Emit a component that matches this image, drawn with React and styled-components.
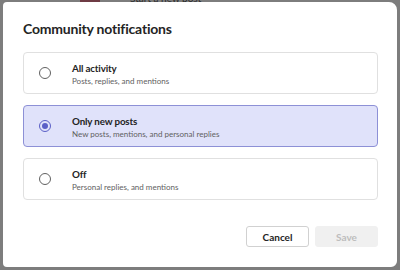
import React, { useState } from 'react';
import styled, { createGlobalStyle, css } from 'styled-components';

const GlobalStyle = createGlobalStyle`
  html, body {
    margin: 0;
    padding: 0;
    background: #7d7d7d;
    font-family: "Segoe UI", Lato, "Noto Sans", sans-serif;
  }
`;

const Screen = styled.div`
  position: relative;
  width: 400px;
  height: 270px;
  overflow: hidden;
  background: #7d7d7d;
  padding: 2px 3px 3px 3px;
  box-sizing: border-box;
`;

const Behind = styled.div`
  position: absolute;
  top: -8px;
  left: 80px;
  display: flex;
  gap: 30px;
  align-items: center;
  font-size: 10px;
  color: #2a2a2a;
`;

const Badge = styled.span`
  width: 20px;
  height: 10px;
  background: #6e3b44;
`;

const Dialog = styled.div`
  position: relative;
  height: 100%;
  box-sizing: border-box;
  background: #ffffff;
  border-radius: 4px 8px 6px 4px;
  padding: 16px 19px 20px 20px;
  display: flex;
  flex-direction: column;
`;

const Title = styled.h2`
  margin: 0 0 13px;
  font-size: 14px;
  line-height: 21px;
  font-weight: 700;
  letter-spacing: -0.2px;
  color: #242424;
`;

const Options = styled.div`
  display: flex;
  flex-direction: column;
  gap: 11px;
`;

const Card = styled.label`
  display: flex;
  align-items: center;
  height: 42px;
  box-sizing: border-box;
  border: 1px solid #e0e0e0;
  border-radius: 4px;
  padding-left: 15px;
  cursor: pointer;
  ${({ $active }) =>
    $active &&
    css`
      background: #e0e2fa;
      border-color: #8d90d6;
    `}
`;

const Radio = styled.span`
  width: 12px;
  height: 12px;
  box-sizing: border-box;
  border-radius: 50%;
  border: 1px solid ${({ $active }) => ($active ? '#5b5fc7' : '#616161')};
  display: flex;
  align-items: center;
  justify-content: center;
  flex-shrink: 0;
  &::after {
    content: '';
    width: 6px;
    height: 6px;
    border-radius: 50%;
    background: ${({ $active }) => ($active ? '#5b5fc7' : 'transparent')};
  }
`;

const Texts = styled.div`
  margin: 2px 0 0 21px;
  display: flex;
  flex-direction: column;
`;

const Label = styled.span`
  font-size: 9.8px;
  line-height: 14px;
  font-weight: 700;
  letter-spacing: -0.15px;
  color: #242424;
`;

const Sub = styled.span`
  font-size: 8px;
  line-height: 13px;
  color: #616161;
`;

const Footer = styled.div`
  margin-top: auto;
  display: flex;
  justify-content: flex-end;
  gap: 6px;
`;

const Button = styled.button`
  width: 63px;
  height: 21px;
  border-radius: 3px;
  font-family: inherit;
  font-size: 10px;
  font-weight: 700;
  padding: 0;
  border: 1px solid #d1d1d1;
  background: #ffffff;
  color: #242424;
  ${({ $disabled }) =>
    $disabled &&
    css`
      background: #f0f0f0;
      border-color: #f0f0f0;
      color: #bdbdbd;
    `}
`;

const options = [
  { id: 'all', label: 'All activity', sub: 'Posts, replies, and mentions' },
  { id: 'new', label: 'Only new posts', sub: 'New posts, mentions, and personal replies' },
  { id: 'off', label: 'Off', sub: 'Personal replies, and mentions' },
];

const App = () => {
  const [selected, setSelected] = useState('new');
  return (
    <>
      <GlobalStyle />
      <Screen>
        <Behind>
          <Badge />
          <span>Start a new post</span>
        </Behind>
        <Dialog>
          <Title>Community notifications</Title>
          <Options>
            {options.map((o) => (
              <Card key={o.id} $active={selected === o.id} onClick={() => setSelected(o.id)}>
                <Radio $active={selected === o.id} />
                <Texts>
                  <Label>{o.label}</Label>
                  <Sub>{o.sub}</Sub>
                </Texts>
              </Card>
            ))}
          </Options>
          <Footer>
            <Button>Cancel</Button>
            <Button $disabled>Save</Button>
          </Footer>
        </Dialog>
      </Screen>
    </>
  );
};

export default App;
